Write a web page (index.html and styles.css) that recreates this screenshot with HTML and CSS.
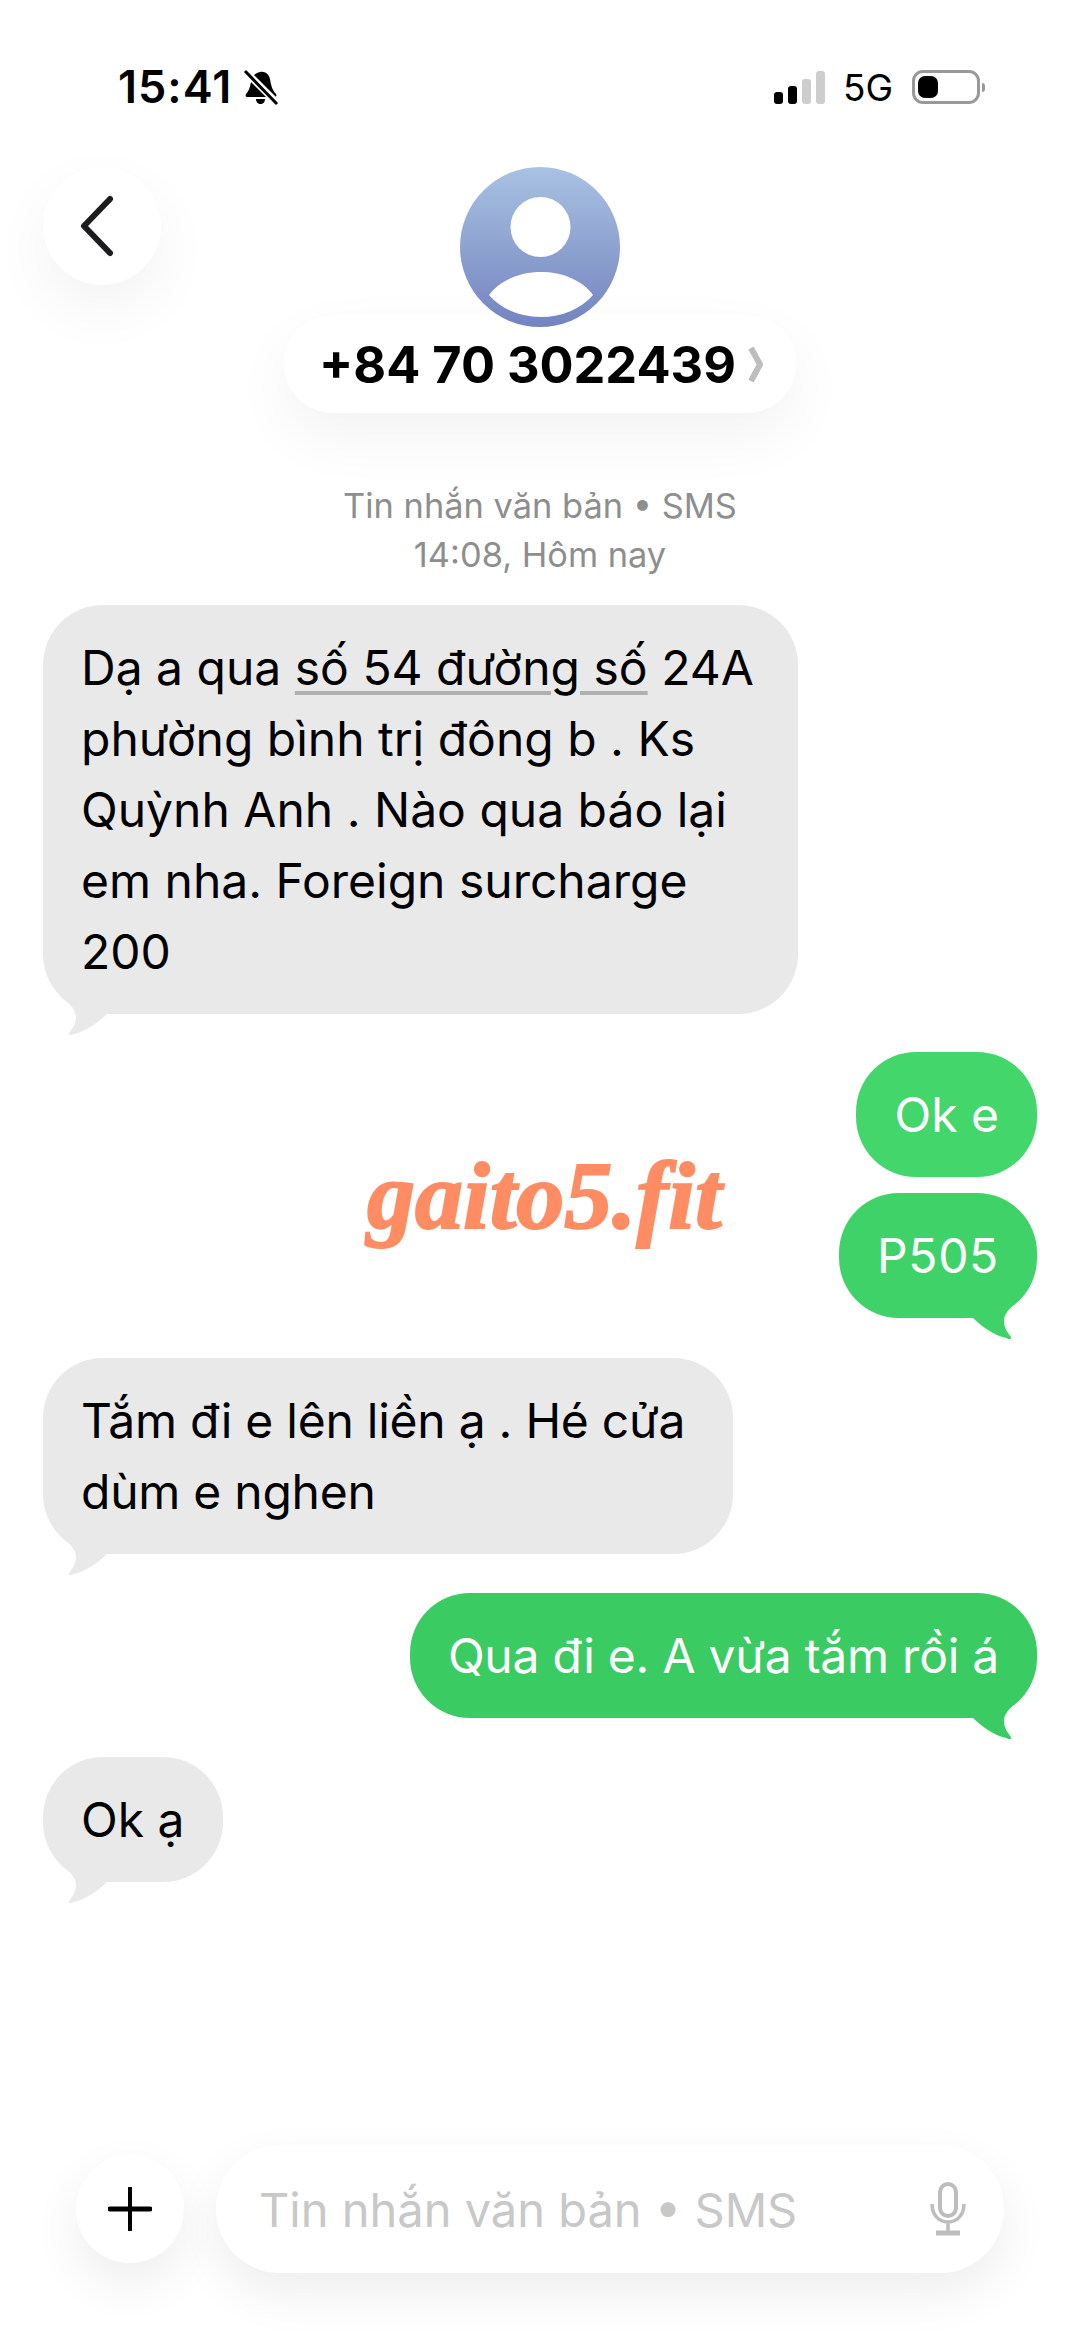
FILE: index.html
```html
<!DOCTYPE html>
<html lang="vi">
<head>
  <meta charset="UTF-8">
  <meta name="viewport" content="width=device-width, initial-scale=1.0">
  <title>Tin nhắn</title>
  <link rel="stylesheet" href="styles.css">
</head>
<body>
  <div id="wrapper">
    <div id="status-bar">
      <div class="clock">
        <span>15:41</span>
        <svg class="bell" width="36" height="37" viewBox="0 0 36 37">
          <path d="M17 3c5-1 9 2 10 7 1 6 2 11 6 15 1 2 0 3-2 3H5c-2 0-3-1-2-3 3-3 4-7 5-12 1-6 4-9 9-10z" fill="#000"/>
          <path d="M13 30h9c0 3-2 5-4.500 5S13 33 13 30z" fill="#000"/>
          <path d="M1 1l33 33" stroke="#fff" stroke-width="7"/>
          <path d="M2 2l32 33" stroke="#000" stroke-width="3"/>
        </svg>
      </div>
      <div class="indicators">
        <div class="signal">
          <i class="bar b1"></i><i class="bar b2"></i><i class="bar b3 off"></i><i class="bar b4 off"></i>
        </div>
        <span class="net">5G</span>
        <div class="battery"><div class="level"></div></div>
        <div class="battery-tip"></div>
      </div>
    </div>

    <header>
      <button class="back">
        <svg width="40" height="62" viewBox="0 0 40 62">
          <path d="M33 4L7 31l26 27" fill="none" stroke="#1c1c1e" stroke-width="6" stroke-linecap="round" stroke-linejoin="round"/>
        </svg>
      </button>
      <div class="contact">
        <svg class="avatar" width="160" height="160" viewBox="0 0 160 160">
          <defs>
            <linearGradient id="avatar-bg" x1="0" y1="0" x2="0" y2="1">
              <stop offset="0" stop-color="#a9c2e2"/>
              <stop offset="1" stop-color="#7383bf"/>
            </linearGradient>
          </defs>
          <circle cx="80" cy="80" r="80" fill="url(#avatar-bg)"/>
          <circle cx="80.500" cy="60" r="30" fill="#fff"/>
          <path d="M29 128C40 113 60 105 81 105s41 8 52 23c-12 14-31 22-52 22s-40-8-52-22z" fill="#fff"/>
        </svg>
        <div class="number">
          <span>+84 70 3022439</span>
          <svg width="15" height="37" viewBox="0 0 15 37">
            <path d="M3 2l9 16.500L3 35" fill="none" stroke="#bdbdbd" stroke-width="6"/>
          </svg>
        </div>
      </div>
    </header>

    <div class="meta">
      <p>Tin nhắn văn bản • SMS</p>
      <p>14:08, Hôm nay</p>
    </div>

    <div id="chat">
      <div class="bubble in wide">
        Dạ a qua <span class="link">số 54 đường số</span> 24A<br>
        phường bình trị đông b . Ks<br>
        Quỳnh Anh . Nào qua báo lại<br>
        em nha. Foreign surcharge<br>
        200
        <svg class="tail" width="50" height="42" viewBox="0 0 50 42"><path d="M0 0C3 8 13 12 13 22c0 7-4 12-7 16-1 3 3 2 5 1 12-3 24-11 33-20V0z"/></svg>
      </div>
      <div class="bubble out g1 first-reply">Ok e</div>
      <div class="bubble out g2">
        P505
        <svg class="tail" width="50" height="42" viewBox="0 0 50 42"><path d="M0 0C3 8 13 12 13 22c0 7-4 12-7 16-1 3 3 2 5 1 12-3 24-11 33-20V0z"/></svg>
      </div>
      <div class="bubble in roomy">
        Tắm đi e lên liền ạ . Hé cửa<br>
        dùm e nghen
        <svg class="tail" width="50" height="42" viewBox="0 0 50 42"><path d="M0 0C3 8 13 12 13 22c0 7-4 12-7 16-1 3 3 2 5 1 12-3 24-11 33-20V0z"/></svg>
      </div>
      <div class="bubble out g3 switch">
        Qua đi e. A vừa tắm rồi á
        <svg class="tail" width="50" height="42" viewBox="0 0 50 42"><path d="M0 0C3 8 13 12 13 22c0 7-4 12-7 16-1 3 3 2 5 1 12-3 24-11 33-20V0z"/></svg>
      </div>
      <div class="bubble in switch">
        Ok ạ
        <svg class="tail" width="50" height="42" viewBox="0 0 50 42"><path d="M0 0C3 8 13 12 13 22c0 7-4 12-7 16-1 3 3 2 5 1 12-3 24-11 33-20V0z"/></svg>
      </div>
      <div class="watermark">gaito5.fit</div>
    </div>

    <footer>
      <button class="plus">
        <svg width="44" height="44" viewBox="0 0 44 44">
          <path d="M22 1v42" stroke="#000" stroke-width="4" stroke-linecap="round"/>
          <path d="M2 22h40" stroke="#000" stroke-width="5" stroke-linecap="round"/>
        </svg>
      </button>
      <div class="input">
        <span>Tin nhắn văn bản • SMS</span>
        <svg width="36" height="54" viewBox="0 0 36 54">
          <rect x="10" y="2" width="16" height="32" rx="8" fill="none" stroke="#bdbdbd" stroke-width="4"/>
          <path d="M2 22c0 11 7 18 16 18s16-7 16-18M18 40v10" fill="none" stroke="#bdbdbd" stroke-width="3.500"/>
          <path d="M6 51h24" stroke="#bdbdbd" stroke-width="5"/>
        </svg>
      </div>
    </footer>
  </div>
</body>
</html>
```

FILE: styles.css
```css
html,body {
  margin: 0;
  padding: 0;
  background-color: #fff;
}
#wrapper {
  width: 1080px;
  height: 2348px;
  overflow: hidden;

  display: flex;
  flex-direction: column;

  font-family: Inter, "Noto Sans", sans-serif;
  color: #000;
}
button {
  border: none;
  padding: 0;
  background-color: #fff;
}

/* status bar */
#status-bar {
  height: 167px;
  box-sizing: border-box;
  padding: 62px 95px 0 118px;

  display: flex;
  justify-content: space-between;
  align-items: flex-start;
}
.clock {
  display: flex;
  align-items: center;
  gap: 11px;

  font-size: 45px;
  line-height: 50px;
  font-weight: 600;
  letter-spacing: 1px;
}
.indicators {
  display: flex;
  align-items: center;
  height: 50px;
}
.signal {
  display: flex;
  align-items: flex-end;
  gap: 5px;
  height: 33px;
  margin-right: 18px;
}
.bar {
  width: 9px;
  border-radius: 3px;
  background-color: #000;
}
.bar.off {
  background-color: #cdcdcd;
}
.b1 { height: 12px; }
.b2 { height: 18px; }
.b3 { height: 25px; }
.b4 { height: 33px; }
.net {
  font-size: 37px;
  margin-right: 19px;
}
.battery {
  width: 68px;
  height: 34px;
  box-sizing: border-box;
  padding: 3px;
  border: 3px solid #999;
  border-radius: 11px;
}
.level {
  width: 20px;
  height: 100%;
  border-radius: 7px;
  background-color: #000;
}
.battery-tip {
  width: 3px;
  height: 9px;
  margin-left: 2px;
  border-radius: 0 3px 3px 0;
  background-color: #999;
}

/* header */
header {
  display: grid;
  grid-template-columns: 1fr auto 1fr;
  align-items: start;
}
.back {
  justify-self: start;
  width: 118px;
  height: 118px;
  margin-left: 43px;
  border-radius: 50%;
  box-shadow: 0 24px 60px rgba(0, 0, 0, 0.05);

  display: flex;
  align-items: center;
  justify-content: center;
}
.back svg {
  margin-right: 10px;
}
.contact {
  display: flex;
  flex-direction: column;
  align-items: center;
}
.avatar {
  position: relative;
  z-index: 1;
  display: block;
}
.number {
  margin-top: -12px;
  height: 98px;
  box-sizing: border-box;
  padding: 0 33px 0 35px;
  border-radius: 49px;
  background-color: #fff;
  box-shadow: 0 24px 60px rgba(0, 0, 0, 0.05);

  display: flex;
  align-items: center;
  gap: 12px;

  font-size: 50.500px;
  font-weight: 700;
}

/* date line */
.meta {
  margin-top: 68px;
  text-align: center;
  font-size: 34.400px;
  line-height: 49px;
  color: #8e8e8e;
}
.meta p {
  margin: 0;
}

/* messages */
#chat {
  position: relative;
  margin-top: 26px;
  padding: 0 43px;

  display: flex;
  flex-direction: column;
  align-items: flex-start;
  gap: 16px;
}
.bubble {
  position: relative;
  box-sizing: border-box;
  padding: 27px 38px;
  border-radius: 60px;

  font-size: 48px;
  line-height: 71px;
  white-space: nowrap;
}
.bubble.first-reply {
  margin-top: 22px;
}
.bubble.switch {
  margin-top: 23px;
}
.bubble.wide {
  padding-right: 44px;
}
.bubble.roomy {
  margin-top: 24px;
  padding-right: 48px;
  letter-spacing: -0.25px;
}
.in {
  background-color: #e9e9e9;
  color: #000;
}
.in .tail {
  fill: #e9e9e9;
  left: 20px;
}
.out {
  align-self: flex-end;
  color: #fff;
}
.out .tail {
  right: 20px;
  transform: scaleX(-1);
}
.g1 { background-color: #43d66b; }
.g2 {
  background-color: #3fd268;
  letter-spacing: 0.7px;
}
.g2 .tail { fill: #3fd268; }
.g3 {
  background-color: #3acc63;
  letter-spacing: -0.25px;
}
.g3 .tail { fill: #3acc63; }
.tail {
  position: absolute;
  bottom: -23px;
}
.link {
  text-decoration: underline;
  text-decoration-color: #b0b0b0;
  text-decoration-thickness: 4px;
  text-underline-offset: 6px;
  text-decoration-skip-ink: auto;
}
.watermark {
  position: absolute;
  left: 367px;
  top: 535px;

  font-family: "Liberation Serif", serif;
  font-size: 96px;
  font-weight: 700;
  font-style: italic;
  color: #ff8c62;
  -webkit-text-stroke: 2px #ff8c62;
}

/* input */
footer {
  margin-top: auto;
  padding: 0 76px 75px 76px;

  display: flex;
  align-items: center;
  gap: 32px;
}
.plus {
  flex: none;
  width: 108px;
  height: 108px;
  border-radius: 50%;
  box-shadow: 0 20px 50px rgba(0, 0, 0, 0.07);

  display: flex;
  align-items: center;
  justify-content: center;
}
.input {
  flex: 1;
  height: 128px;
  box-sizing: border-box;
  padding: 0 38px 0 43px;
  border-radius: 64px;
  background-color: #fff;
  box-shadow: 0 20px 50px rgba(0, 0, 0, 0.07);

  display: flex;
  align-items: center;
  justify-content: space-between;

  font-size: 47px;
  color: #c8c8c8;
}
```
